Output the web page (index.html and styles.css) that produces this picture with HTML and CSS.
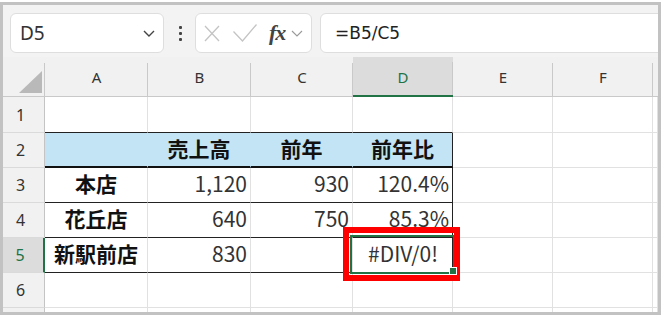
FILE: index.html
```html
<!DOCTYPE html>
<html lang="ja">
<head>
  <meta charset="UTF-8" />
  <title>前年比 #DIV/0!</title>
  <link rel="stylesheet" href="styles.css">
</head>
<body>
  <div class="window">
    <div class="toolbar">
      <div class="namebox">
        <span>D5</span>
        <svg class="chev" width="12" height="7" viewBox="0 0 12 7"><path d="M1 1l5 5 5-5" /></svg>
      </div>
      <div class="dots"><i></i><i></i><i></i></div>
      <div class="fxbox">
        <svg class="cancel" width="16" height="17" viewBox="0 0 16 17"><path d="M1 1l14 15M15 1L1 16" /></svg>
        <svg class="enter" width="24" height="18" viewBox="0 0 24 18"><path d="M0.5 7.5l9 9.5 14-16.5" /></svg>
        <span class="fx">fx</span>
        <svg class="chev small" width="12" height="7" viewBox="0 0 12 7"><path d="M1 1l5 5 5-5" /></svg>
      </div>
      <div class="formula">=B5/C5</div>
    </div>

    <div class="sheet">
      <!-- column headers -->
      <div class="hd corner"><svg width="23" height="22" viewBox="0 0 23 22"><polygon points="23,0 23,22 0,22" /></svg></div>
      <div class="hd">A</div>
      <div class="hd">B</div>
      <div class="hd">C</div>
      <div class="hd active">D</div>
      <div class="hd">E</div>
      <div class="hd">F</div>
      <div class="hd end"></div>

      <!-- row 1 -->
      <div class="rh">1</div>
      <div class="c bb"></div>
      <div class="c bb"></div>
      <div class="c bb"></div>
      <div class="c bb"></div>
      <div class="c"></div>
      <div class="c"></div>
      <div class="c"></div>

      <!-- row 2 -->
      <div class="rh">2</div>
      <div class="c blue"></div>
      <div class="c blue lbl">売上高</div>
      <div class="c blue lbl">前年</div>
      <div class="c blue lbl br">前年比</div>
      <div class="c"></div>
      <div class="c"></div>
      <div class="c"></div>

      <!-- row 3 -->
      <div class="rh">3</div>
      <div class="c lbl bb">本店</div>
      <div class="c num bb">1,120</div>
      <div class="c num bb">930</div>
      <div class="c num bb br">120.4%</div>
      <div class="c"></div>
      <div class="c"></div>
      <div class="c"></div>

      <!-- row 4 -->
      <div class="rh">4</div>
      <div class="c lbl bb">花丘店</div>
      <div class="c num bb">640</div>
      <div class="c num bb">750</div>
      <div class="c num bb br">85.3%</div>
      <div class="c"></div>
      <div class="c"></div>
      <div class="c"></div>

      <!-- row 5 -->
      <div class="rh active">5</div>
      <div class="c lbl bb">新駅前店</div>
      <div class="c num bb">830</div>
      <div class="c num bb"></div>
      <div class="c err bb br selected">#DIV/0!<span class="mark"></span></div>
      <div class="c"></div>
      <div class="c"></div>
      <div class="c"></div>

      <!-- row 6 -->
      <div class="rh">6</div>
      <div class="c"></div>
      <div class="c"></div>
      <div class="c"></div>
      <div class="c"></div>
      <div class="c"></div>
      <div class="c"></div>
      <div class="c"></div>

      <!-- row 7 (cut off) -->
      <div class="rh"></div>
      <div class="c"></div>
      <div class="c"></div>
      <div class="c"></div>
      <div class="c"></div>
      <div class="c"></div>
      <div class="c"></div>
      <div class="c"></div>
    </div>
  </div>
</body>
</html>
```

FILE: styles.css
```css
body {
  margin: 0;
  background: #fff;
  font-family: "Noto Sans", "Liberation Sans", sans-serif;
}
.window {
  margin-top: 2px;
  width: 655px;
  height: 307px;
  border: 3px solid #c2c2c2;
  overflow: hidden;
  background: #fff;
}
.toolbar {
  display: flex;
  align-items: center;
  box-sizing: border-box;
  height: 52px;
  padding: 8px 0 4px 7px;
  background: #f3f3f3;
}
.namebox {
  display: flex;
  align-items: center;
  justify-content: space-between;
  box-sizing: border-box;
  width: 154px;
  height: 40px;
  padding: 0 8px 0 9px;
  background: #fff;
  border: 1px solid #dedede;
  border-radius: 6px;
  font-size: 19px;
  color: #333;
}
.chev path {
  fill: none;
  stroke: #444;
  stroke-width: 1.4;
}
.chev.small path {
  stroke: #9a9a9a;
  stroke-width: 1.1;
}
.dots {
  display: flex;
  flex-direction: column;
  align-items: center;
  gap: 3px;
  width: 30px;
  margin-left: 1px;
}
.dots i {
  width: 3px;
  height: 3px;
  background: #444;
  border-radius: 1px;
}
.fxbox {
  display: flex;
  align-items: center;
  box-sizing: border-box;
  width: 117px;
  height: 40px;
  padding-left: 8px;
  background: #fff;
  border: 1px solid #dedede;
  border-radius: 6px;
}
.fxbox path {
  fill: none;
  stroke: #c4c4c4;
  stroke-width: 1.3;
}
.fxbox .enter {
  margin-left: 13px;
}
.fx {
  margin-left: 12px;
  margin-right: 6px;
  font-family: "Liberation Serif", serif;
  font-style: italic;
  font-weight: bold;
  font-size: 22px;
  color: #444;
  letter-spacing: -1px;
}
.formula {
  flex: 1;
  box-sizing: border-box;
  height: 40px;
  margin-left: 8px;
  margin-right: -10px;
  padding-left: 14px;
  line-height: 38px;
  background: #fff;
  border: 1px solid #dedede;
  border-radius: 6px 0 0 6px;
  font-family: "DejaVu Sans", sans-serif;
  font-size: 17px;
  color: #222;
}

.sheet {
  display: grid;
  grid-template-columns: 42px 103px 103px 102px 100px 100px 100px 1fr;
  grid-template-rows: 40px 36px repeat(5, 35px) 1fr;
  height: 255px;
  font-family: "Noto Sans CJK JP", sans-serif;
}
.hd {
  display: flex;
  align-items: center;
  justify-content: center;
  box-sizing: border-box;
  padding-top: 1px;
  border-bottom: 1px solid #c9c9c9;
  background: #f1f1f1 linear-gradient(#c9c9c9, #c9c9c9) no-repeat right bottom / 1px 33px;
  font-family: "Noto Sans", sans-serif;
  font-size: 15px;
  color: #333;
}
.hd.end {
  background: #f1f1f1;
}
.hd.active {
  background: #dcdcdc linear-gradient(#c9c9c9, #c9c9c9) no-repeat right bottom / 1px 33px;
  border-bottom: 2px solid #217346;
  color: #217346;
}
.corner {
  align-items: flex-end;
  justify-content: flex-end;
  padding: 0 3px 3px 0;
}
.corner polygon {
  fill: #b9b9b9;
}
.rh {
  display: flex;
  align-items: center;
  justify-content: center;
  box-sizing: border-box;
  padding-right: 6px;
  background: #f1f1f1;
  border-right: 1px solid #c4c4c4;
  border-bottom: 1px solid #dadada;
  font-family: "Noto Sans", sans-serif;
  font-size: 16px;
  color: #333;
}
.rh.active {
  background: #dcdcdc;
  border-right: 2px solid #217346;
  color: #217346;
}
.c {
  display: flex;
  align-items: center;
  box-sizing: border-box;
  padding-bottom: 4px;
  border-right: 1px solid #e1e1e1;
  border-bottom: 1px solid #e1e1e1;
  font-size: 21px;
  color: #333;
}
.c.blue {
  background: #c2e4f5;
  border-right-color: #c2e4f5;
  border-bottom: 2px solid #111;
}
.c.bb {
  border-bottom-color: #222;
}
.c.br {
  border-right-color: #222;
}
.lbl {
  justify-content: center;
  font-weight: bold;
  color: #111;
}
.num {
  justify-content: flex-end;
  padding-right: 3px;
}
.err {
  justify-content: center;
  padding-left: 1px;
}

/* active cell and the red callout drawn over it */
.selected {
  position: relative;
}
.selected::before {
  content: "";
  position: absolute;
  left: -3px;
  top: -3px;
  right: -3px;
  bottom: -2px;
  border: 2px solid #217346;
}
.selected::after {
  content: "";
  position: absolute;
  right: -5px;
  bottom: -3px;
  width: 6px;
  height: 6px;
  background: #217346;
  border: 1px solid #fff;
}
.mark {
  position: absolute;
  left: -10px;
  top: -11px;
  right: -8px;
  bottom: -9px;
  border: 6px solid #f00;
}
```
